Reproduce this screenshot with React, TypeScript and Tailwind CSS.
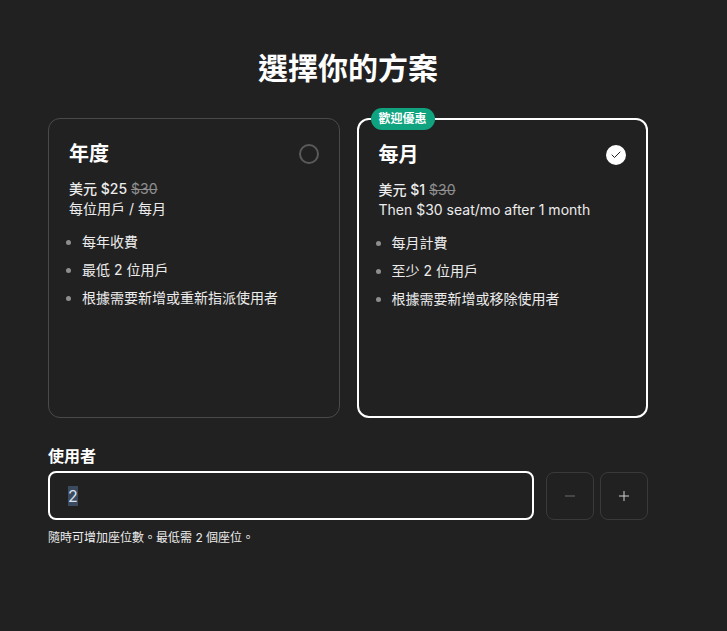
import React, { useState } from 'react';
import { Minus, Plus, Check } from 'lucide-react';

const FONT = '"Inter", "Noto Sans CJK TC", sans-serif';

interface Plan {
  id: 'yearly' | 'monthly';
  name: string;
  price: string;
  oldPrice: string;
  note: string;
  features: string[];
  badge?: string;
}

const PLANS: Plan[] = [
  {
    id: 'yearly',
    name: '年度',
    price: '美元 $25',
    oldPrice: '$30',
    note: '每位用戶 / 每月',
    features: ['每年收費', '最低 2 位用戶', '根據需要新增或重新指派使用者'],
  },
  {
    id: 'monthly',
    name: '每月',
    price: '美元 $1',
    oldPrice: '$30',
    note: 'Then $30 seat/mo after 1 month',
    features: ['每月計費', '至少 2 位用戶', '根據需要新增或移除使用者'],
    badge: '歡迎優惠',
  },
];

const PlanCard: React.FC<{ plan: Plan; selected: boolean; onSelect: () => void }> = ({
  plan,
  selected,
  onSelect,
}) => (
  <button
    type="button"
    onClick={onSelect}
    className={`relative flex h-[300px] flex-col rounded-xl px-5 pt-[23px] text-left ${
      selected ? 'border-2 border-white' : 'border border-[#4a4a4a]'
    }`}
  >
    {plan.badge && (
      <span className="absolute -top-[12px] left-3 rounded-full bg-[#10a37f] px-2 py-[3px] text-[12px] font-bold leading-[16px] text-white">
        {plan.badge}
      </span>
    )}
    <div className="flex items-center justify-between">
      <span className="text-[20px] font-bold leading-[24px] text-white">{plan.name}</span>
      {selected ? (
        <span className="flex h-5 w-5 items-center justify-center rounded-full bg-white">
          <Check size={12} strokeWidth={2} className="text-[#212121]" />
        </span>
      ) : (
        <span className="h-5 w-5 rounded-full border-2 border-[#5a5a5a]" />
      )}
    </div>
    <div className="mt-[13px] text-[14px] leading-[20px] text-[#ececec]">
      <div>
        <span className="font-medium">{plan.price}</span>{' '}
        <span className="text-[#8e8e8e] line-through">{plan.oldPrice}</span>
      </div>
      <div>{plan.note}</div>
    </div>
    <ul className="mt-[13px] flex flex-col gap-2 text-[14px] leading-[20px] text-[#ececec]">
      {plan.features.map((f) => (
        <li key={f} className="flex items-center">
          <span className="-ml-[3px] mr-[11px] h-[5px] w-[5px] rounded-full bg-[#8e8e8e]" />
          {f}
        </li>
      ))}
    </ul>
  </button>
);

export default function App() {
  const [plan, setPlan] = useState<Plan['id']>('monthly');
  const [seats, setSeats] = useState(2);

  return (
    <div className="min-h-[631px] bg-[#212121]" style={{ fontFamily: FONT }}>
      <div className="ml-[48px] w-[600px] pt-[49px]">
        <h1 className="text-center text-[30px] font-bold leading-[38px] text-white">選擇你的方案</h1>

        <div className="mt-[31px] grid grid-cols-2 gap-[17px]">
          {PLANS.map((p) => (
            <PlanCard key={p.id} plan={p} selected={plan === p.id} onSelect={() => setPlan(p.id)} />
          ))}
        </div>

        <div className="mt-[27px]">
          <label className="block text-[16px] font-bold leading-[22px] text-white">使用者</label>
          <div className="mt-[4px] flex items-center">
            <div className="flex h-[49px] flex-1 items-center rounded-lg border-2 border-white px-[18px]">
              <span className="bg-[#3b4a5e] text-[16px] leading-[20px] text-[#d8e2f0]">{seats}</span>
            </div>
            <button
              type="button"
              onClick={() => setSeats(Math.max(2, seats - 1))}
              className="ml-3 flex h-[48px] w-[48px] items-center justify-center rounded-lg border border-[#3a3a3a] text-[#6a6a6a]"
            >
              <Minus size={16} strokeWidth={1.5} />
            </button>
            <button
              type="button"
              onClick={() => setSeats(seats + 1)}
              className="ml-[6px] flex h-[48px] w-[48px] items-center justify-center rounded-lg border border-[#3a3a3a] text-[#cfcfcf]"
            >
              <Plus size={16} strokeWidth={1.5} />
            </button>
          </div>
          <p className="mt-[9px] text-[12px] leading-[18px] text-[#ececec]">隨時可增加座位數。最低需 2 個座位。</p>
        </div>
      </div>
    </div>
  );
}
